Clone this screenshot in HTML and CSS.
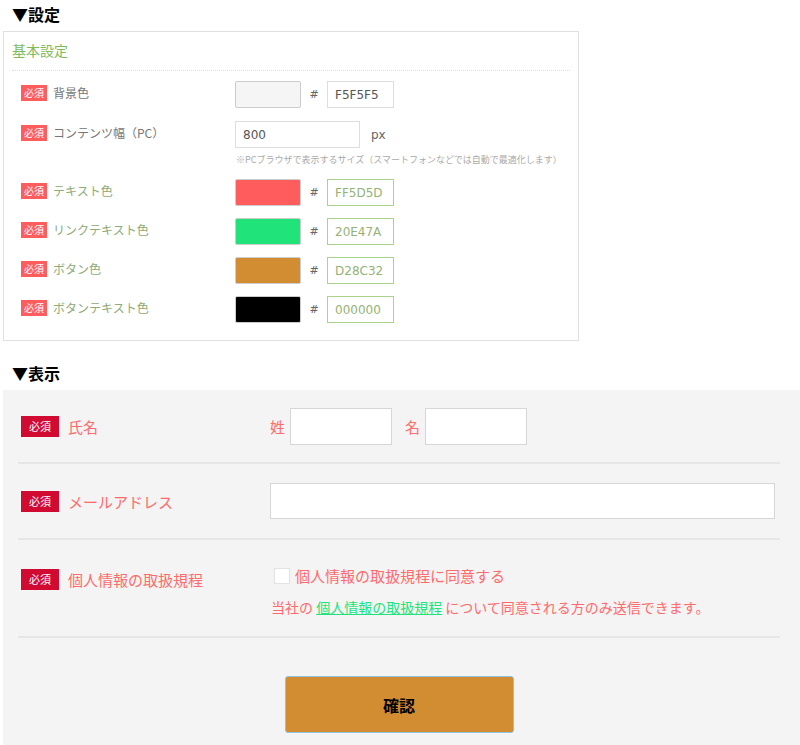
FILE: index.html
```html
<!DOCTYPE html>
<html lang="ja">
<head>
    <meta charset="UTF-8">
    <title>フォーム設定</title>
    <link rel="stylesheet" href="styles.css">
</head>
<body>
    <h2 class="sec-title">▼設定</h2>

    <div class="panel">
        <div class="panel-head">基本設定</div>

        <div class="set-row">
            <div class="set-label"><span class="req">必須</span>背景色</div>
            <div class="set-ctrl">
                <span class="swatch" style="background:#F5F5F5"></span>
                <span class="hash">#</span>
                <input class="hex" type="text" value="F5F5F5">
            </div>
        </div>

        <div class="set-row">
            <div class="set-label"><span class="req">必須</span>コンテンツ幅（PC）</div>
            <div class="set-ctrl col">
                <div class="line">
                    <input class="width-in" type="text" value="800">
                    <span class="unit">px</span>
                </div>
                <p class="note">※PCブラウザで表示するサイズ（スマートフォンなどでは自動で最適化します）</p>
            </div>
        </div>

        <div class="set-row changed">
            <div class="set-label"><span class="req">必須</span>テキスト色</div>
            <div class="set-ctrl">
                <span class="swatch" style="background:#FF5D5D"></span>
                <span class="hash">#</span>
                <input class="hex" type="text" value="FF5D5D">
            </div>
        </div>

        <div class="set-row changed">
            <div class="set-label"><span class="req">必須</span>リンクテキスト色</div>
            <div class="set-ctrl">
                <span class="swatch" style="background:#20E47A"></span>
                <span class="hash">#</span>
                <input class="hex" type="text" value="20E47A">
            </div>
        </div>

        <div class="set-row changed">
            <div class="set-label"><span class="req">必須</span>ボタン色</div>
            <div class="set-ctrl">
                <span class="swatch" style="background:#D28C32"></span>
                <span class="hash">#</span>
                <input class="hex" type="text" value="D28C32">
            </div>
        </div>

        <div class="set-row changed">
            <div class="set-label"><span class="req">必須</span>ボタンテキスト色</div>
            <div class="set-ctrl">
                <span class="swatch" style="background:#000000"></span>
                <span class="hash">#</span>
                <input class="hex" type="text" value="000000">
            </div>
        </div>
    </div>

    <h2 class="sec-title">▼表示</h2>

    <div class="preview">
        <div class="form-row">
            <div class="form-label"><span class="req-big">必須</span>氏名</div>
            <div class="form-ctrl">
                <span class="name-cap">姓</span>
                <input class="name-in" type="text">
                <span class="name-cap second">名</span>
                <input class="name-in" type="text">
            </div>
        </div>

        <div class="form-row">
            <div class="form-label"><span class="req-big">必須</span>メールアドレス</div>
            <div class="form-ctrl">
                <input class="mail-in" type="text">
            </div>
        </div>

        <div class="form-row policy">
            <div class="form-label"><span class="req-big">必須</span>個人情報の取扱規程</div>
            <div class="form-ctrl col">
                <label class="agree"><span class="check"></span>個人情報の取扱規程に同意する</label>
                <p class="policy-note">当社の <a href="#">個人情報の取扱規程</a> について同意される方のみ送信できます。</p>
            </div>
        </div>

        <div class="submit-wrap">
            <button class="submit">確認</button>
        </div>
    </div>
</body>
</html>
```

FILE: styles.css
```css
body {
    margin: 0;
    padding: 0 0 0 3px;
    font-family: "DejaVu Sans", "Noto Sans CJK JP", sans-serif;
    background: #fff;
    overflow: hidden;
}

.sec-title {
    margin: 0;
    padding: 2px 0 0 9px;
    height: 29px;
    font-size: 16px;
    font-weight: bold;
    color: #000;
    font-family: "Noto Sans CJK JP", sans-serif;
}

.panel {
    width: 574px;
    height: 308px;
    border: 1px solid #e0e0e0;
    margin-bottom: 18px;
}

.panel-head {
    margin: 0 8px;
    padding: 8px 0 9px;
    font-size: 14px;
    color: #7dbb5b;
    border-bottom: 1px dotted #ddd;
    font-family: "Noto Sans CJK JP", sans-serif;
    line-height: 21px;
}

.set-row {
    display: flex;
    margin-top: 10px;
}

.set-row + .set-row {
    margin-top: 13px;
}

.set-row.changed {
    margin-top: 12px;
}

.set-label {
    width: 231px;
    padding: 4px 0 0 17px;
    box-sizing: border-box;
    display: flex;
    align-items: flex-start;
    font-size: 12px;
    color: #777;
    font-family: "Noto Sans CJK JP", sans-serif;
    line-height: 16px;
}

.changed .set-label {
    color: #8eaa76;
}

.req {
    display: inline-block;
    width: 26px;
    height: 16px;
    margin-right: 6px;
    background: #ff5d5d;
    color: #fff;
    font-size: 10px;
    line-height: 16px;
    text-align: center;
    font-family: "Noto Sans CJK JP", sans-serif;
}

.set-ctrl {
    display: flex;
    align-items: center;
}

.set-ctrl.col {
    flex-direction: column;
    align-items: flex-start;
}

.line {
    display: flex;
    align-items: center;
}

.swatch {
    display: inline-block;
    width: 64px;
    height: 25px;
    border: 1px solid #ccc;
    border-radius: 2px;
}

.hash {
    width: 26px;
    text-align: center;
    font-size: 11px;
    color: #666;
}

.hex, .width-in {
    height: 27px;
    box-sizing: border-box;
    border: 1px solid #ddd;
    padding: 0 7px;
    font-family: "DejaVu Sans", sans-serif;
    font-size: 12px;
    color: #555;
    outline: none;
}

.hex {
    width: 67px;
}

.width-in {
    width: 125px;
}

.changed .hex {
    border-color: #aad38d;
    color: #95b276;
}

.unit {
    margin-left: 11px;
    font-size: 12px;
    color: #666;
}

.note {
    margin: 5px 0 0 1px;
    font-size: 9px;
    color: #aaa;
    font-family: "Noto Sans CJK JP", sans-serif;
    line-height: 14px;
}

.preview {
    background: #f4f4f4;
    height: 360px;
    padding: 0 20px 0 15px;
}

.form-row {
    display: flex;
    border-bottom: 2px solid #e6e6e6;
}

.form-row:nth-child(1) {
    height: 72px;
    align-items: center;
}

.form-row:nth-child(2) {
    height: 74px;
    align-items: center;
}

.form-row.policy {
    height: 96px;
    align-items: flex-start;
}

.form-label {
    width: 249px;
    padding-left: 3px;
    display: flex;
    align-items: center;
    font-size: 15px;
    color: #ff6b6b;
    font-family: "Noto Sans CJK JP", sans-serif;
}

.policy .form-label {
    padding-top: 29px;
}

.req-big {
    display: inline-block;
    width: 38px;
    height: 21px;
    margin-right: 9px;
    background: #d10a32;
    color: #fff;
    font-size: 11px;
    line-height: 21px;
    text-align: center;
}

.form-ctrl {
    flex: 1;
    display: flex;
    align-items: center;
    font-family: "Noto Sans CJK JP", sans-serif;
}

.form-ctrl.col {
    flex-direction: column;
    align-items: flex-start;
    padding-top: 26px;
}

.name-cap {
    font-size: 15px;
    color: #ff6b6b;
    margin-right: 5px;
}

.name-cap.second {
    margin-left: 13px;
}

.name-in {
    width: 102px;
    height: 37px;
    box-sizing: border-box;
    border: 1px solid #d6d6d6;
    background: #fff;
}

.mail-in {
    width: 505px;
    height: 36px;
    box-sizing: border-box;
    border: 1px solid #d6d6d6;
    background: #fff;
}

.agree {
    display: flex;
    align-items: center;
    font-size: 15px;
    color: #ff6b6b;
    margin-left: 4px;
    line-height: 20px;
}

.check {
    display: inline-block;
    width: 14px;
    height: 14px;
    border: 1px solid #e2e2e2;
    background: #fff;
    margin-right: 5px;
}

.policy-note {
    margin: 11px 0 0 1px;
    font-size: 14px;
    color: #ff6b6b;
    line-height: 20px;
}

.policy-note a {
    color: #20e47a;
    text-decoration: underline;
}

.submit-wrap {
    display: flex;
    justify-content: center;
    padding-top: 38px;
}

.submit {
    width: 229px;
    height: 57px;
    background: #d28c32;
    border: 1px solid #8ec3de;
    border-radius: 3px;
    font-size: 16px;
    font-weight: bold;
    color: #000;
    font-family: "Noto Sans CJK JP", sans-serif;
}
```
